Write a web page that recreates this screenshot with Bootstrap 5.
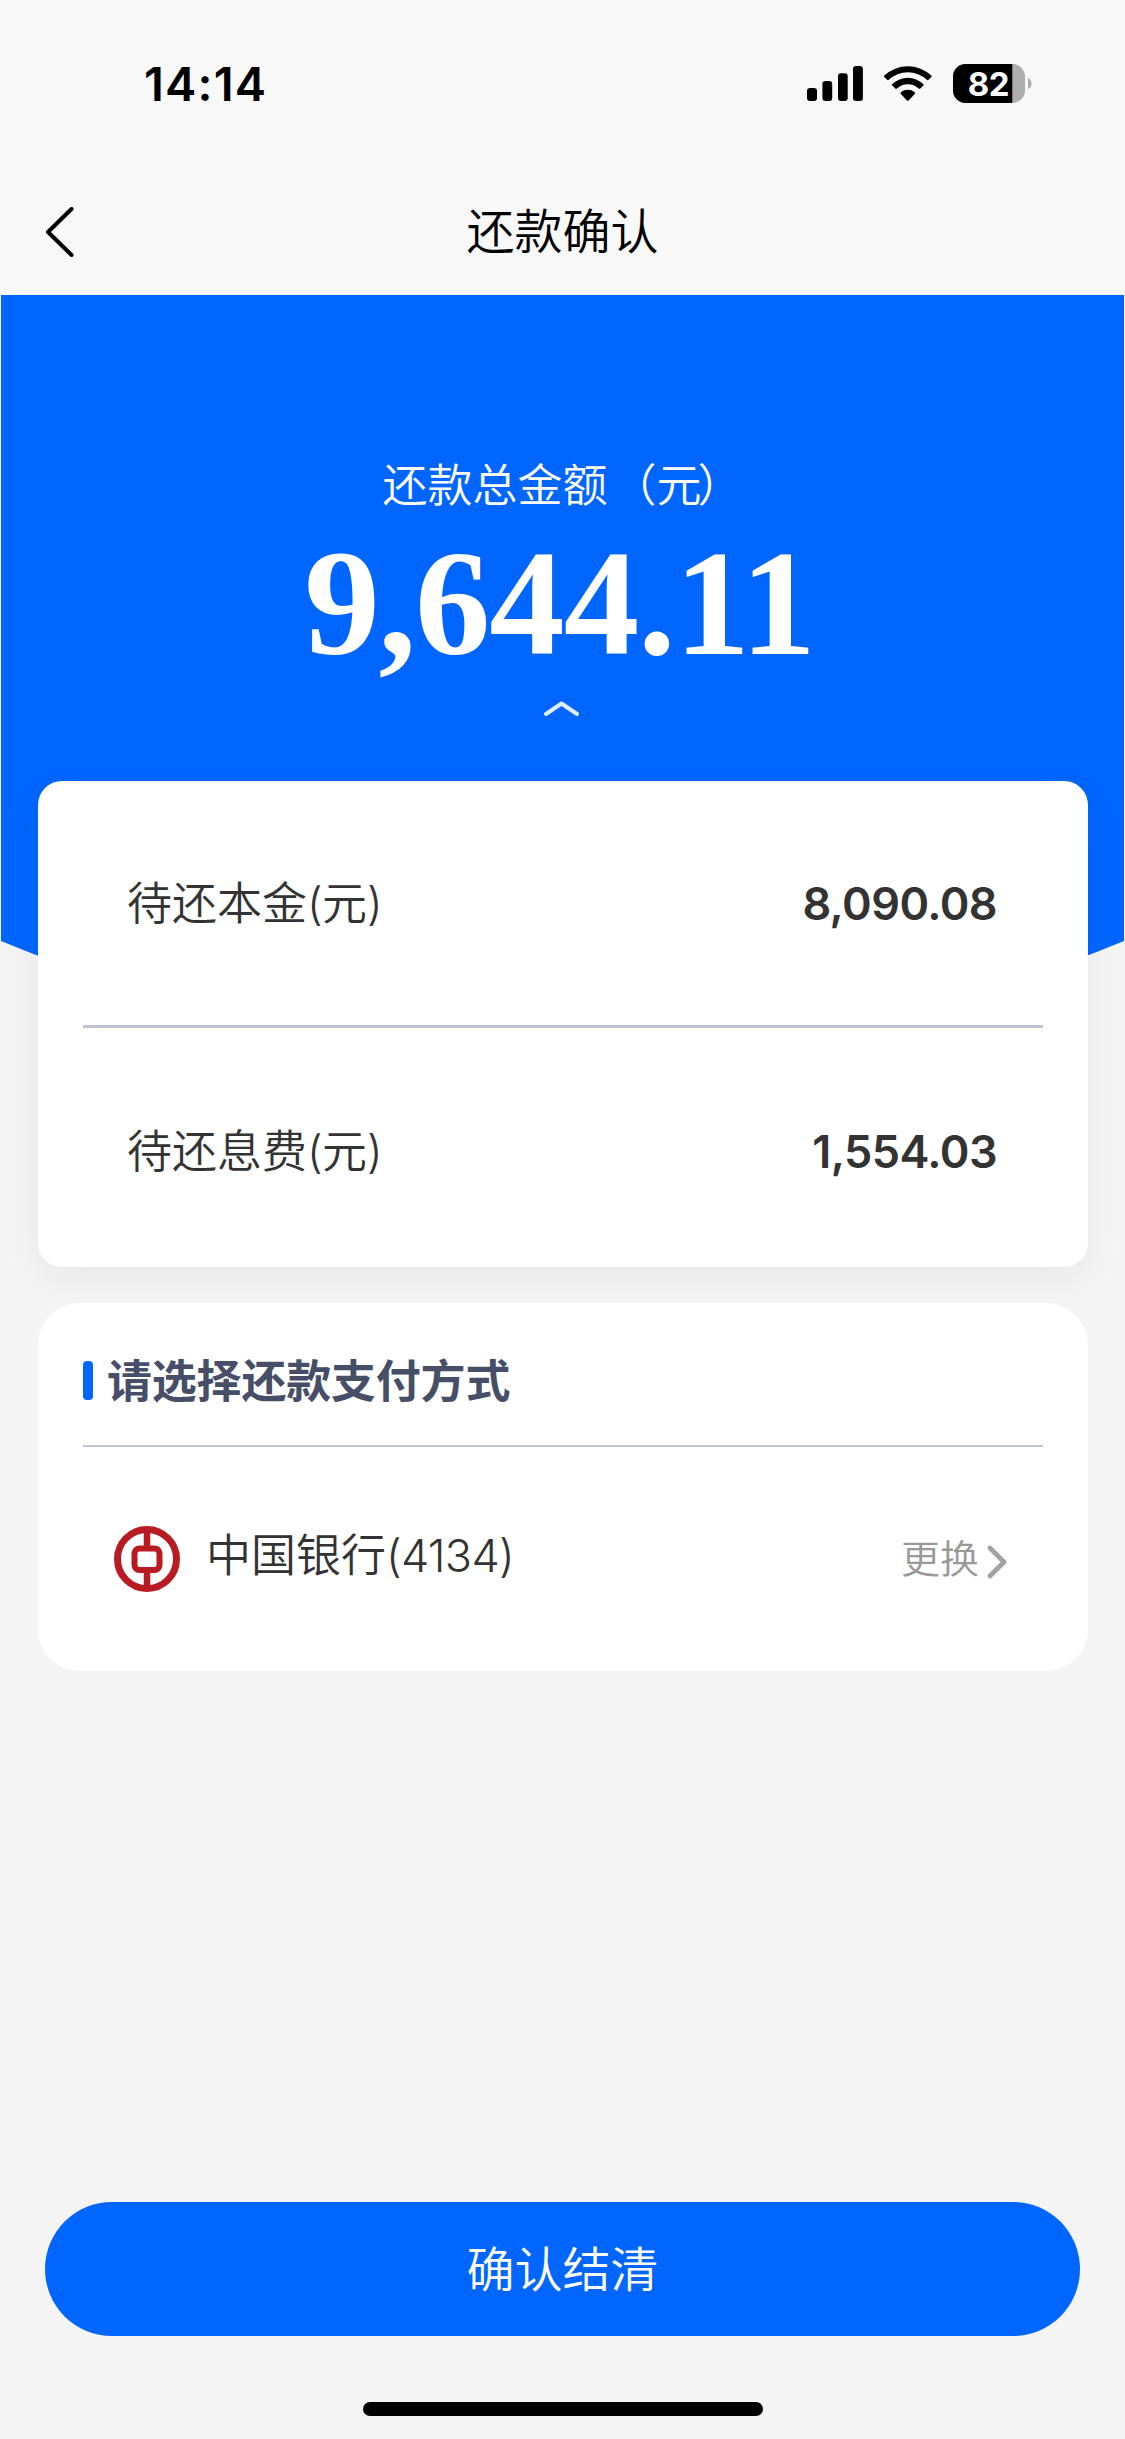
<!DOCTYPE html>
<html lang="zh-CN">
<head>
<meta charset="utf-8">
<meta name="viewport" content="width=device-width, initial-scale=1">
<title>还款确认</title>
<link href="https://cdn.jsdelivr.net/npm/bootstrap@5.3.0/dist/css/bootstrap.min.css" rel="stylesheet">
<style>
  body { font-family: Inter, "Noto Sans CJK SC", sans-serif; background: #f4f4f4; color: #333; font-size: 45px; line-height: 64px; font-weight: 350; }
  .screen { width: 1125px; height: 2439px; overflow: hidden; }
  .topbar { height: 295px; background: #f8f8f8; color: #000; }
  .statusbar { height: 168px; padding: 0 93px 0 144px; }
  .clock { font-size: 47px; font-weight: 600; letter-spacing: 1.2px; }
  .titlebar { height: 127px; padding: 1px 46px 0; display: grid; grid-template-columns: 60px 1fr 60px; }
  .title { font-size: 48px; }
  .hero { height: 486px; padding-top: 160px; background: #0066ff; margin: 0 1px; color: #fff; }
  .hero-label { line-height: 62px; }
  .hero-label .open { letter-spacing: 4px; }
  .hero-label .yuan { letter-spacing: -9px; margin-right: 5px; }
  .amount { font-family: "Liberation Serif", serif; font-weight: 700; font-size: 151px; line-height: 168px; letter-spacing: -1.2px; padding: 2px 6px 0 0; }
  .caret { margin-top: 12px; margin-right: 2px; }
  .hero-tail { height: 200px; margin: 0 1px -200px; }
  .panel { width: 1050px; margin-left: 38px; }
  .detail { height: 486px; border-radius: 24px; padding: 0 45px; box-shadow: 0 14px 42px rgba(0,0,0,.05); }
  .detail-row { height: 244px; padding: 2px 46px 0 44px; }
  .detail-row + .detail-row { border-top: 3px solid #bec5d1; height: 242px; padding-top: 9px; }
  .ascii { letter-spacing: -.8px; }
  .num { font-weight: 600; letter-spacing: -.6px; }
  .pay { height: 368px; margin-top: 36px; border-radius: 42px; padding: 0 45px; }
  .pay-head { height: 144px; border-bottom: 2px solid #bfc3d4; color: #464f67; font-weight: 700; gap: 14px; padding-top: 12px; }
  .pay-head span { padding-top: 3px; letter-spacing: -.2px; }
  .accent { width: 10px; height: 39px; border-radius: 4px; background: #0066ff; }
  .pay-row { height: 224px; padding: 0 36px 0 30px; }
  .bank { margin-left: 25px; padding-bottom: 7px; }
  .bank .ascii { letter-spacing: -.7px; }
  .change { font-size: 39px; color: #999; gap: 8px; }
  .change svg { margin-top: 5px; }
  .submit { width: 1035px; height: 134px; font-size: 48px; background: #0066ff; margin-bottom: 66px; line-height: 64px; font-weight: 350; }
  .submit span { display: block; padding-top: 2px; }
  .home { width: 400px; height: 14px; margin-bottom: 23px; }
</style>
</head>
<body>
<main class="screen d-flex flex-column">
  <header class="topbar">
    <div class="statusbar d-flex justify-content-between align-items-center">
      <span class="clock">14:14</span>
      <svg width="226" height="40" viewBox="806 64 226 40">
        <rect x="807" y="88" width="10" height="13" rx="3"/>
        <rect x="822.4" y="81" width="9.8" height="20" rx="3"/>
        <rect x="838" y="73.3" width="9.7" height="27.7" rx="3"/>
        <rect x="853" y="66" width="9.9" height="35" rx="3"/>
        <path d="M884.3 75.5A34.5 34.5 0 0 1 931.3 75.5Q932 76.3 931.3 77L928.5 79.8Q927.7 80.6 926.9 79.8A28 28 0 0 0 888.7 79.8Q887.9 80.6 887.1 79.8L884.3 77Q883.6 76.3 884.3 75.5Z"/>
        <path d="M892.3 84A22.6 22.6 0 0 1 923.3 84Q924 84.8 923.3 85.6L920.3 88.5Q919.5 89.2 918.7 88.5A16 16 0 0 0 896.9 88.5Q896.1 89.2 895.3 88.5L892.3 85.6Q891.6 84.8 892.3 84Z"/>
        <path d="M900.9 92.3A10.8 10.8 0 0 1 914.7 92.3Q915.4 93.1 914.7 93.9L908.6 100.4Q907.8 101.2 907 100.4L900.9 93.9Q900.2 93.1 900.9 92.3Z"/>
        <clipPath id="cell"><rect x="953" y="64" width="72" height="39" rx="12.5"/></clipPath>
        <g clip-path="url(#cell)"><rect x="953" y="64" width="72" height="39" fill="#adadad"/><rect x="953" y="64" width="59.3" height="39"/></g>
        <path d="M1028 78q3.6 1.5 3.6 5.5t-3.6 5.5z" fill="#adadad"/>
        <text x="988.5" y="95.5" text-anchor="middle" font-size="33" font-weight="700" letter-spacing="-.5" fill="#fff">82</text>
      </svg>
    </div>
    <div class="titlebar align-items-center">
      <svg width="28" height="50" viewBox="0 0 28 50" fill="none" stroke="#000" stroke-width="4" stroke-linecap="round" stroke-linejoin="round"><path d="M25.5 2 2 25l23.5 23"/></svg>
      <div class="title text-center">还款确认</div>
    </div>
  </header>

  <section class="hero text-center d-flex flex-column align-items-center">
    <div class="hero-label">还款总金<span class="open">额</span>（<span class="yuan">元</span><span>）</span></div>
    <div class="amount">9,644.11</div>
    <svg class="caret" width="36" height="18" viewBox="0 0 36 18" fill="none" stroke="#fff" stroke-opacity=".88" stroke-width="4" stroke-linecap="round" stroke-linejoin="round"><path d="M2 15 17.5 4.5 33 15"/></svg>
  </section>
  <svg class="hero-tail flex-shrink-0" width="1123" height="200" viewBox="0 0 1123 200"><path d="M0 0H1123V160Q870 265 561 265T0 160Z" fill="#0066ff"/></svg>

  <section class="panel detail bg-white position-relative">
    <div class="detail-row d-flex justify-content-between align-items-center"><span>待还本金<span class="ascii">(</span>元<span class="ascii">)</span></span><span class="num">8,090.08</span></div>
    <div class="detail-row d-flex justify-content-between align-items-center"><span>待还息费<span class="ascii">(</span>元<span class="ascii">)</span></span><span class="num">1,554.03</span></div>
  </section>

  <section class="panel pay bg-white position-relative">
    <div class="pay-head d-flex align-items-center"><i class="accent"></i><span>请选择还款支付方式</span></div>
    <div class="pay-row d-flex align-items-center">
      <svg class="flex-shrink-0" width="68" height="68" viewBox="0 0 68 68" fill="none" stroke="#b81c22">
        <circle cx="34" cy="34" r="29.5" stroke-width="7"/>
        <path d="M34 5v16M34 48v16" stroke-width="6.5"/>
        <rect x="21.5" y="23.5" width="25" height="21.5" rx="5" stroke-width="6"/>
      </svg>
      <span class="bank">中国银行<span class="ascii">(4134)</span></span>
      <span class="change d-flex align-items-center ms-auto"><span>更换</span>
        <svg width="20" height="34" viewBox="0 0 20 34" fill="none" stroke="#a3a3a3" stroke-width="4.8" stroke-linecap="round" stroke-linejoin="round"><path d="M3 3 17 17 3 31"/></svg></span>
    </div>
  </section>

  <button class="submit btn btn-primary border-0 rounded-pill p-0 mx-auto mt-auto flex-shrink-0" type="button"><span>确认结清</span></button>
  <div class="home bg-black rounded-pill mx-auto flex-shrink-0"></div>
</main>
<script src="https://cdn.jsdelivr.net/npm/bootstrap@5.3.0/dist/js/bootstrap.bundle.min.js"></script>
</body>
</html>
